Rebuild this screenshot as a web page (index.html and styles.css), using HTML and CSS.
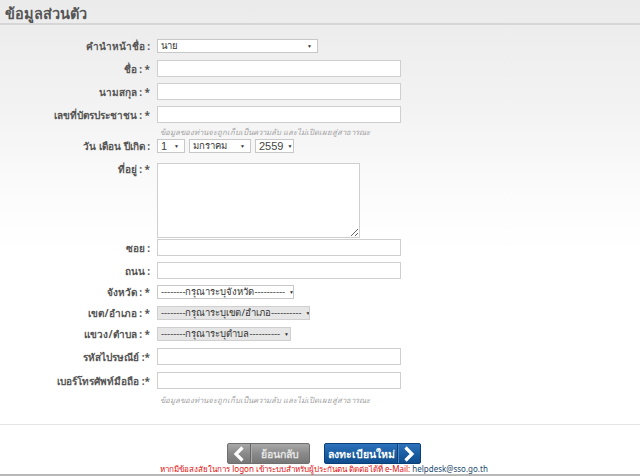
FILE: index.html
```html
<!DOCTYPE html>
<html lang="th">
<head>
<meta charset="utf-8">
<title>ข้อมูลส่วนตัว</title>
<link rel="stylesheet" href="styles.css">
</head>
<body>
<div class="page">
  <h1 class="title">ข้อมูลส่วนตัว</h1>
  <form class="form">
    <div class="row r-first">
      <label class="lbl">คำนำหน้าชื่อ :</label>
      <div class="select w-prefix"><span>นาย</span><span class="arr">▼</span></div>
    </div>
    <div class="row r-7">
      <label class="lbl">ชื่อ : *</label>
      <input class="txt" type="text">
    </div>
    <div class="row r-6">
      <label class="lbl">นามสกุล : *</label>
      <input class="txt" type="text">
    </div>
    <div class="row r-6">
      <label class="lbl">เลขที่บัตรประชาชน : *</label>
      <input class="txt" type="text">
    </div>
    <div class="row r-3">
      <span class="lbl"></span>
      <p class="hint">ข้อมูลของท่านจะถูกเก็บเป็นความลับ และไม่เปิดเผยสู่สาธารณะ</p>
    </div>
    <div class="row r-1">
      <label class="lbl">วัน เดือน ปีเกิด :</label>
      <div class="dates">
        <div class="select num w-day"><span>1</span><span class="arr">▼</span></div>
        <div class="select w-month"><span>มกราคม</span><span class="arr">▼</span></div>
        <div class="select num w-year"><span>2559</span><span class="arr">▼</span></div>
      </div>
    </div>
    <div class="row r-9 top">
      <label class="lbl lbl-top">ที่อยู่ : *</label>
      <textarea class="area"></textarea>
    </div>
    <div class="row r-1">
      <label class="lbl">ซอย :</label>
      <input class="txt" type="text">
    </div>
    <div class="row r-6">
      <label class="lbl">ถนน :</label>
      <input class="txt" type="text">
    </div>
    <div class="row r-6">
      <label class="lbl">จังหวัด : *</label>
      <div class="select w-prov"><span>--------กรุณาระบุจังหวัด----------</span><span class="arr">▼</span></div>
    </div>
    <div class="row r-7">
      <label class="lbl">เขต/อำเภอ : *</label>
      <div class="select dis w-dist"><span>--------กรุณาระบุเขต/อำเภอ----------</span><span class="arr">▼</span></div>
    </div>
    <div class="row r-7">
      <label class="lbl">แขวง/ตำบล : *</label>
      <div class="select dis w-sub"><span>--------กรุณาระบุตำบล----------</span><span class="arr">▼</span></div>
    </div>
    <div class="row r-7">
      <label class="lbl">รหัสไปรษณีย์ :*</label>
      <input class="txt" type="text">
    </div>
    <div class="row r-7">
      <label class="lbl">เบอร์โทรศัพท์มือถือ :*</label>
      <input class="txt" type="text">
    </div>
    <div class="row r-5">
      <span class="lbl"></span>
      <p class="hint">ข้อมูลของท่านจะถูกเก็บเป็นความลับ และไม่เปิดเผยสู่สาธารณะ</p>
    </div>
  </form>
  <div class="actions">
    <div class="buttons">
      <a class="btn btn-back" href="#">
        <span class="ico"><svg width="12" height="16" viewBox="0 0 12 16"><path d="M9.5 1.5 L3 8 L9.5 14.5" fill="none" stroke="#fff" stroke-width="3.2"/></svg></span>
        <span class="btxt">ย้อนกลับ</span>
      </a>
      <a class="btn btn-next" href="#">
        <span class="btxt">ลงทะเบียนใหม่</span>
        <span class="ico"><svg width="12" height="16" viewBox="0 0 12 16"><path d="M2.5 1.5 L9 8 L2.5 14.5" fill="none" stroke="#fff" stroke-width="3.2"/></svg></span>
      </a>
    </div>
    <p class="help">หากมีข้อสงสัยในการ logon เข้าระบบสำหรับผู้ประกันตน ติดต่อได้ที่ e-Mail: <span class="mail">helpdesk@sso.go.th</span></p>
  </div>
</div>
</body>
</html>
```
FILE: styles.css
```css
html, body {
  margin: 0;
  padding: 0;
}
body {
  width: 640px;
  height: 476px;
  overflow: hidden;
  font-family: Tahoma, "Noto Sans", "Liberation Sans", sans-serif;
  color: #555;
  line-height: 13px;
  background: linear-gradient(#ebebeb 0px, #f3f3f3 110px, #fbfbfb 190px, #ffffff 250px);
}
.page {
  height: 476px;
  display: flex;
  flex-direction: column;
}
.title {
  margin: 0;
  height: 25px;
  box-sizing: border-box;
  padding: 5px 0 0 5px;
  font-size: 14.5px;
  line-height: 16px;
  font-weight: bold;
  color: #555;
  border-bottom: 2px solid #d6d6d6;
}
.form {
  margin: 0;
  padding: 0 0 18px;
  border-bottom: 1px solid #e4e4e4;
}
.row {
  display: flex;
  align-items: center;
}
.row.top { align-items: flex-start; }
.r-first { margin-top: 14px; }
.r-0 { margin-top: 0; }
.r-1 { margin-top: 1px; }
.r-3 { margin-top: 3px; }
.r-5 { margin-top: 5px; }
.r-6 { margin-top: 6px; }
.r-7 { margin-top: 7px; }
.r-9 { margin-top: 10px; }
.lbl {
  width: 150px;
  flex: none;
  text-align: right;
  font-size: 10px;
  line-height: 12px;
  font-weight: bold;
  color: #555;
  margin-right: 7px;
  white-space: nowrap;
}
.lbl-top { padding-top: 0; }
.txt {
  width: 244px;
  height: 17px;
  box-sizing: border-box;
  margin: 0;
  border: 1px solid #cfcfcf;
  background: #fff;
  padding: 0 3px;
  display: block;
}
.area {
  width: 203px;
  height: 75px;
  box-sizing: border-box;
  margin: 0;
  border: 1px solid #cfcfcf;
  background: #fff;
  resize: both;
  display: block;
}
.select {
  height: 14px;
  box-sizing: border-box;
  border: 1px solid #c8c8c8;
  background: #fff;
  display: flex;
  align-items: center;
  justify-content: space-between;
  padding: 0 5px 0 3px;
  font-size: 9.5px;
  line-height: 12px;
  color: #333;
  white-space: nowrap;
  overflow: hidden;
}
.select.num {
  font-family: "Liberation Sans", Arial, sans-serif;
  font-size: 11px;
  color: #444;
}
.select.dis { background: #e6e6e6; border-color: #cfcfcf; }
.arr {
  font-size: 5px;
  color: #333;
  margin-left: 4px;
}
.w-prefix { width: 161px; }
.w-day { width: 28px; }
.w-month { width: 62px; }
.w-year { width: 39px; }
.w-prov { width: 137px; }
.w-dist { width: 153px; }
.w-sub { width: 134px; }
.dates {
  display: flex;
  gap: 4px;
}
.hint {
  margin: 0 0 0 3px;
  height: 12px;
  line-height: 12px;
  font-size: 7.8px;
  font-style: italic;
  color: #a0a0a0;
  white-space: nowrap;
}
.actions {
  flex: 1;
  display: flex;
  flex-direction: column;
  align-items: center;
  padding-top: 18px;
  border-bottom: 2px solid #b8b8b8;
  box-sizing: border-box;
  min-height: 0;
}
.buttons {
  display: flex;
  gap: 14px;
  margin-left: 8px;
}
.btn {
  height: 21px;
  box-sizing: border-box;
  display: flex;
  align-items: center;
  text-decoration: none;
  border-radius: 2px;
  font-size: 10.5px;
  line-height: 12px;
  font-weight: bold;
}
.btn-back {
  width: 83px;
  background: linear-gradient(#a8a8a8, #8a8a8a 50%, #777 100%);
  border: 1px solid #6f6f6f;
  color: #e4e4e4;
}
.btn-back .ico {
  width: 22px;
  height: 100%;
  display: flex;
  align-items: center;
  justify-content: center;
  border-right: 1px solid #666;
  box-shadow: 1px 0 0 #aaa;
}
.btn-back .btxt {
  flex: 1;
  text-align: center;
}
.btn-next {
  width: 97px;
  background: linear-gradient(#2d72bb, #1a5ea3 50%, #0e4b8c 100%);
  border: 1px solid #0b3f77;
  color: #fff;
}
.btn-next .btxt {
  flex: 1;
  text-align: center;
}
.btn-next .ico {
  width: 22px;
  height: 100%;
  display: flex;
  align-items: center;
  justify-content: center;
  border-left: 1px solid #0c3f75;
  box-shadow: inset 1px 0 0 #4a86c4;
}
.help {
  margin: 0 0 0 8px;
  font-size: 8px;
  line-height: 10px;
  color: #e01010;
  white-space: nowrap;
}
.mail { color: #1d4a70; }
```
